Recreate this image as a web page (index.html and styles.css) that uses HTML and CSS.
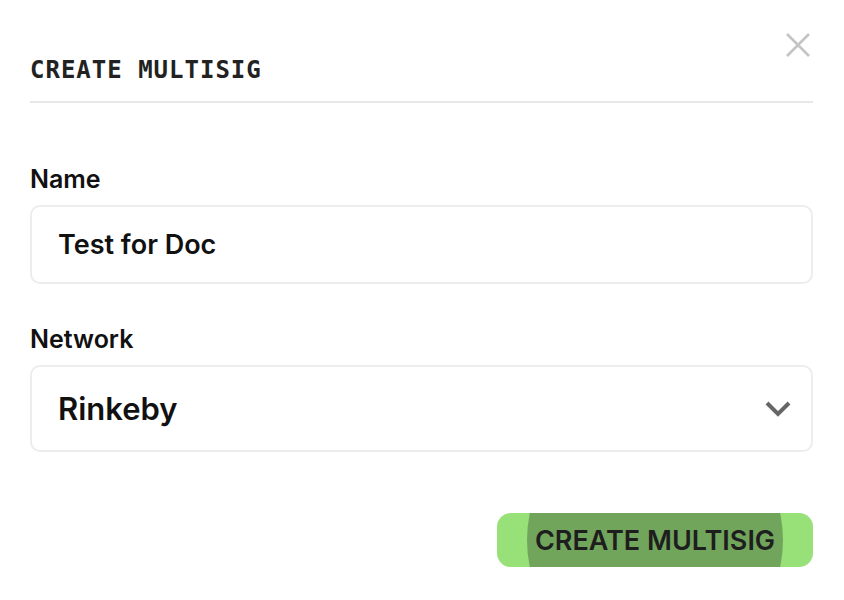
FILE: index.html
```html
<!DOCTYPE html>
<html lang="en">
<head>
    <meta charset="UTF-8">
    <meta name="viewport" content="width=device-width, initial-scale=1.0">
    <title>Create Multisig</title>
    <link rel="stylesheet" href="styles.css">
</head>
<body>

    <div class="modal">
        <div class="modal-header">
            <h1>CREATE MULTISIG</h1>
            <button type="button" class="close-btn" aria-label="Close">
                <svg width="24" height="24" viewBox="0 0 24 24">
                    <path d="M1 1 L23 23 M23 1 L1 23" stroke="#c4c4c4" stroke-width="2.6" fill="none"/>
                </svg>
            </button>
        </div>

        <form id="form">
            <label for="name">Name</label>
            <input type="text" id="name" class="field" value="Test for Doc">

            <label for="network">Network</label>
            <div class="select field">
                <span id="network">Rinkeby</span>
                <svg width="26" height="16" viewBox="0 0 26 16">
                    <polyline points="2,2 13,13 24,2" stroke="#666" stroke-width="4" fill="none"/>
                </svg>
            </div>

            <div class="actions">
                <button type="button" class="create-btn">CREATE MULTISIG</button>
            </div>
        </form>
    </div>

</body>
</html>
```

FILE: styles.css
```css
body {
    font-family: Inter, "Noto Sans", sans-serif;
    background-color: #fff;
    color: #111;
    margin: 0;
}
.modal {
    padding: 31px 31px 0 30px;
}
.modal-header {
    display: flex;
    justify-content: space-between;
    align-items: flex-start;
    border-bottom: 2px solid #e8e8e8;
    padding-bottom: 16px;
}
h1 {
    font-family: "DejaVu Sans Mono", monospace;
    font-size: 24px;
    font-weight: bold;
    letter-spacing: 1px;
    color: #222;
    margin: 24px 0 0 0;
    line-height: 30px;
}
.close-btn {
    background: none;
    border: none;
    padding: 0;
    margin: 2px 3px 0 0;
    cursor: pointer;
    line-height: 0;
}
label {
    display: block;
    font-size: 25px;
    font-weight: 600;
    margin: 61px 0 11px 0;
    line-height: 30px;
}
label[for="network"] {
    margin-top: 40px;
}
.field {
    display: block;
    width: 100%;
    box-sizing: border-box;
    border: 2px solid #ededed;
    border-radius: 10px;
    background: #fff;
    font-family: Inter, "Noto Sans", sans-serif;
    color: #111;
    outline: none;
}
input.field {
    height: 79px;
    padding: 0 26px;
    font-size: 27px;
    font-weight: 600;
}
.select {
    height: 87px;
    padding: 0 20px 0 26px;
    display: flex;
    align-items: center;
    justify-content: space-between;
    font-size: 31px;
    font-weight: 600;
}
.actions {
    display: flex;
    justify-content: flex-end;
    margin-top: 61px;
}
.create-btn {
    position: relative;
    overflow: hidden;
    background-color: #98e078;
    color: #1e1e1e;
    border: none;
    border-radius: 14px;
    height: 54px;
    width: 316px;
    font-family: Inter, "Noto Sans", sans-serif;
    font-size: 27px;
    font-weight: 600;
    cursor: pointer;
    z-index: 0;
}
.create-btn::before {
    content: "";
    position: absolute;
    left: 30px;
    top: -101px;
    width: 256px;
    height: 256px;
    border-radius: 50%;
    background-color: #72a55c;
    z-index: -1;
}
```
